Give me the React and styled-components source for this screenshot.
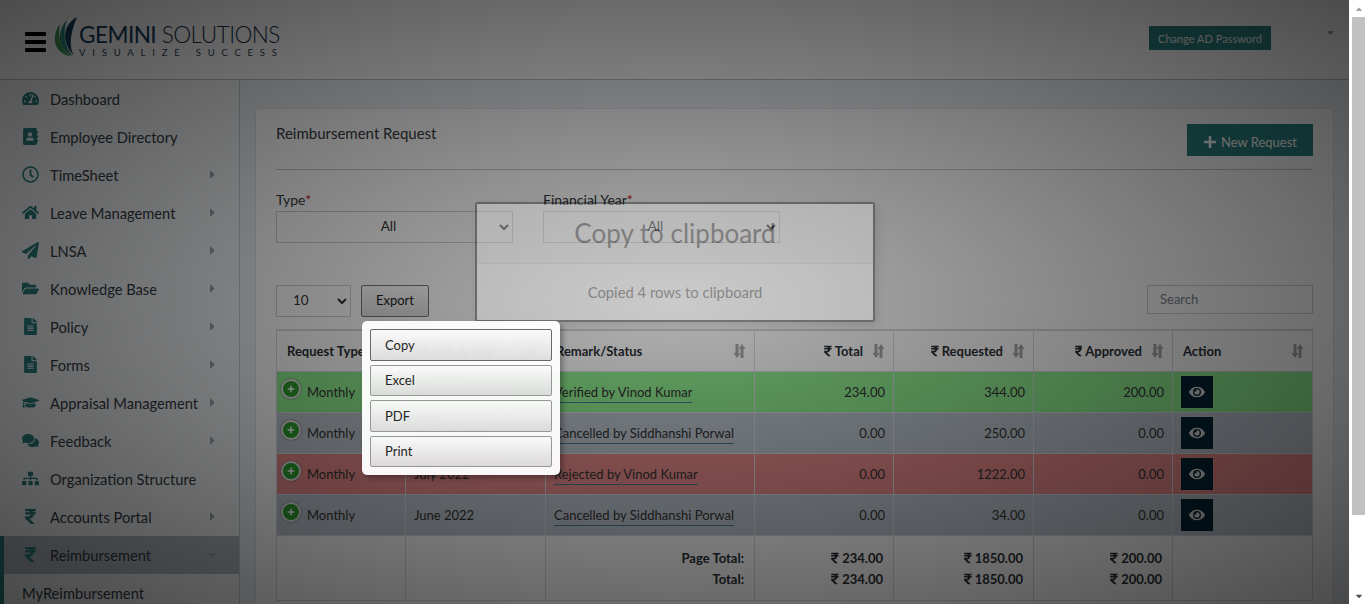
import styled, { createGlobalStyle } from "styled-components";
import {
  FaTachometerAlt,
  FaAddressBook,
  FaRegClock,
  FaHome,
  FaPaperPlane,
  FaFolderOpen,
  FaFileAlt,
  FaGraduationCap,
  FaComments,
  FaSitemap,
  FaRupeeSign,
  FaCaretRight,
  FaCaretDown,
  FaCaretUp,
  FaPlus,
  FaEye,
} from "react-icons/fa";

const menu = [
  { label: "Dashboard", icon: FaTachometerAlt },
  { label: "Employee Directory", icon: FaAddressBook },
  { label: "TimeSheet", icon: FaRegClock, sub: true },
  { label: "Leave Management", icon: FaHome, sub: true },
  { label: "LNSA", icon: FaPaperPlane, sub: true },
  { label: "Knowledge Base", icon: FaFolderOpen, sub: true },
  { label: "Policy", icon: FaFileAlt, sub: true },
  { label: "Forms", icon: FaFileAlt, sub: true },
  { label: "Appraisal Management", icon: FaGraduationCap, sub: true },
  { label: "Feedback", icon: FaComments, sub: true },
  { label: "Organization Structure", icon: FaSitemap },
  { label: "Accounts Portal", icon: FaRupeeSign, sub: true },
];

const rows = [
  { month: "September 2022", remark: "Verified by Vinod Kumar", total: "234.00", requested: "344.00", approved: "200.00", tone: "#90ee90" },
  { month: "August 2022", remark: "Cancelled by Siddhanshi Porwal", total: "0.00", requested: "250.00", approved: "0.00", tone: "#bdc6cf" },
  { month: "July 2022", remark: "Rejected by Vinod Kumar", total: "0.00", requested: "1222.00", approved: "0.00", tone: "#e88a8a" },
  { month: "June 2022", remark: "Cancelled by Siddhanshi Porwal", total: "0.00", requested: "34.00", approved: "0.00", tone: "#bdc6cf" },
];

const Leaf = () => (
  <LogoMark viewBox="0 0 26 42">
    <path d="M24 0C15 5 10 14 13 25c1 5 4 10 8 13C15 30 18 14 24 0z" fill="#15405f" />
    <path d="M14 3C7 10 5 20 9 29c2 4 6 8 11 10C12 32 9 16 14 3z" fill="#2a8a7e" />
    <path d="M7 7C1 15 0 25 5 32c3 4 8 7 13 7C9 34 4 20 7 7z" fill="#3f9a55" />
  </LogoMark>
);

const SortIcon = ({ right }) => (
  <SortArrows $right={right} viewBox="0 0 13 14">
    <path d="M2.5 0h3v9h2L4 14 .5 9h2z" />
    <path d="M7.5 14h3V5h2L9 0 5.500 5h2z" />
  </SortArrows>
);

const Rupee = () => <RupeeGlyph><FaRupeeSign /></RupeeGlyph>;

const App = () => {
  return (
    <>
      <GlobalStyle />
      <Shell>
        <Page>
          <Header>
            <Burger>
              <span />
              <span />
              <span />
            </Burger>
            <Logo>
              <Leaf />
              <LogoText>
                <LogoName>
                  <b>GEMINI</b> SOLUTIONS
                </LogoName>
                <LogoTag>VISUALIZE SUCCESS</LogoTag>
              </LogoText>
            </Logo>
            <HeaderRight>
              <PasswordButton>Change AD Password</PasswordButton>
              <UserCaret>
                <FaCaretDown />
              </UserCaret>
            </HeaderRight>
          </Header>
          <Body>
            <Sidebar>
              {menu.map((item) => (
                <NavItem key={item.label}>
                  <NavIcon>
                    <item.icon />
                  </NavIcon>
                  <NavLabel>{item.label}</NavLabel>
                  {item.sub && (
                    <NavCaret>
                      <FaCaretRight />
                    </NavCaret>
                  )}
                </NavItem>
              ))}
              <NavItem $active>
                <NavIcon>
                  <FaRupeeSign />
                </NavIcon>
                <NavLabel>Reimbursement</NavLabel>
                <NavCaret>
                  <FaCaretDown />
                </NavCaret>
              </NavItem>
              <SubItem>MyReimbursement</SubItem>
            </Sidebar>
            <Main>
              <Card>
                <CardHead>
                  <CardTitle>Reimbursement Request</CardTitle>
                  <NewButton>
                    <FaPlus />
                    New Request
                  </NewButton>
                </CardHead>
                <Filters>
                  <Field>
                    <FieldLabel>
                      Type<Star>*</Star>
                    </FieldLabel>
                    <FieldSelect defaultValue="All">
                      <option>All</option>
                    </FieldSelect>
                  </Field>
                  <Field>
                    <FieldLabel>
                      Financial Year<Star>*</Star>
                    </FieldLabel>
                    <FieldSelect defaultValue="All">
                      <option>All</option>
                    </FieldSelect>
                  </Field>
                </Filters>
                <Controls>
                  <LengthSelect defaultValue="10">
                    <option>10</option>
                  </LengthSelect>
                  <ExportButton>Export</ExportButton>
                  <SearchInput placeholder="Search" />
                </Controls>
                <Table>
                  <colgroup>
                    <col width="129" />
                    <col width="140" />
                    <col width="209" />
                    <col width="139" />
                    <col width="140" />
                    <col width="139" />
                    <col width="140" />
                  </colgroup>
                  <thead>
                    <tr>
                      <Th><ThInner>Request Type<SortIcon /></ThInner></Th>
                      <Th><ThInner>Month &amp; Year<SortIcon /></ThInner></Th>
                      <Th><ThInner>Remark/Status<SortIcon /></ThInner></Th>
                      <Th><ThInner $right><Rupee />Total<SortIcon right /></ThInner></Th>
                      <Th><ThInner $right><Rupee />Requested<SortIcon right /></ThInner></Th>
                      <Th><ThInner $right><Rupee />Approved<SortIcon right /></ThInner></Th>
                      <Th><ThInner>Action<SortIcon /></ThInner></Th>
                    </tr>
                  </thead>
                  <tbody>
                    {rows.map((row) => (
                      <Row key={row.month} $tone={row.tone}>
                        <Td>
                          <TypeCell>
                            <PlusBadge><FaPlus /></PlusBadge>
                            <span>Monthly</span>
                          </TypeCell>
                        </Td>
                        <Td>{row.month}</Td>
                        <Td><RemarkLink>{row.remark}</RemarkLink></Td>
                        <Td $right>{row.total}</Td>
                        <Td $right>{row.requested}</Td>
                        <Td $right>{row.approved}</Td>
                        <Td><ViewButton><FaEye /></ViewButton></Td>
                      </Row>
                    ))}
                  </tbody>
                  <tfoot>
                    <tr>
                      <FootCell />
                      <FootCell />
                      <FootCell>Page Total:<br />Total:</FootCell>
                      <FootCell><Rupee />234.00<br /><Rupee />234.00</FootCell>
                      <FootCell><Rupee />1850.00<br /><Rupee />1850.00</FootCell>
                      <FootCell><Rupee />200.00<br /><Rupee />200.00</FootCell>
                      <FootCell />
                    </tr>
                  </tfoot>
                </Table>
              </Card>
            </Main>
          </Body>
          <Backdrop />
          <InfoBox>
            <InfoTitle>Copy to clipboard</InfoTitle>
            <InfoText>Copied 4 rows to clipboard</InfoText>
          </InfoBox>
          <Collection>
            <CollectionButton $focus>Copy</CollectionButton>
            <CollectionButton>Excel</CollectionButton>
            <CollectionButton>PDF</CollectionButton>
            <CollectionButton>Print</CollectionButton>
          </Collection>
        </Page>
        <Scrollbar>
          <ScrollArrow><FaCaretUp /></ScrollArrow>
          <ScrollThumb />
          <ScrollArrow $bottom><FaCaretDown /></ScrollArrow>
        </Scrollbar>
      </Shell>
    </>
  );
};

export default App;

const GlobalStyle = createGlobalStyle`
  html, body {
    margin: 0;
    padding: 0;
    height: 604px;
    overflow: hidden;
  }
  body {
    font-family: "Lato", "Open Sans", sans-serif;
    font-size: 14px;
    color: #333;
  }
  * {
    box-sizing: border-box;
  }
`;

const Shell = styled.div`
  display: flex;
  width: 1366px;
  height: 604px;
  overflow: hidden;
`;

const Page = styled.div`
  position: relative;
  flex: 0 0 1349px;
  height: 604px;
  overflow: hidden;
  background: #eef1f6;
`;

const Header = styled.header`
  display: flex;
  align-items: center;
  height: 80px;
  padding-left: 25px;
  background: #fff;
  border-bottom: 1px solid #b9c2c9;
`;

const Burger = styled.div`
  display: flex;
  flex-direction: column;
  gap: 4px;
  width: 21px;
  margin-top: 4px;

  span {
    height: 4px;
    border-radius: 1px;
    background: #000;
  }
`;

const Logo = styled.div`
  display: flex;
  align-items: flex-end;
  margin-left: 7px;
  margin-top: -4px;
`;

const LogoMark = styled.svg`
  width: 26px;
  height: 42px;
  flex: none;
`;

const LogoText = styled.div`
  display: flex;
  flex-direction: column;
`;

const LogoName = styled.div`
  font-family: "Lato", sans-serif;
  font-size: 22.6px;
  font-weight: 300;
  line-height: 24px;
  letter-spacing: -0.55px;
  color: #16324a;

  b {
    font-weight: 400;
    color: #123a5c;
  }
`;

const LogoTag = styled.div`
  font-family: "Lato", sans-serif;
  font-size: 9.5px;
  line-height: 12px;
  letter-spacing: 6.8px;
  color: #2d4152;
  white-space: nowrap;
`;

const HeaderRight = styled.div`
  display: flex;
  align-items: center;
  margin-left: auto;
  margin-top: -3px;
`;

const PasswordButton = styled.button`
  width: 122px;
  height: 24px;
  padding: 0;
  border: none;
  background: #2a8080;
  color: #f2f2f2;
  font: 11px "Lato", sans-serif;
`;

const UserCaret = styled.span`
  display: flex;
  margin-left: 54px;
  margin-right: 13px;
  margin-top: -12px;
  font-size: 11px;
  color: #9a9a9a;
`;

const Body = styled.div`
  display: flex;
  height: 524px;
`;

const Sidebar = styled.nav`
  flex: 0 0 240px;
  background: #f4f6f8;
  border-right: 1px solid #c4ccd3;
`;

const NavItem = styled.div`
  display: flex;
  align-items: center;
  height: 38px;
  padding: 0 20px 1px 22px;
  background: ${(props) => (props.$active ? "#b4bcc2" : "transparent")};
  border-left: ${(props) => (props.$active ? "4px solid #2a8080" : "none")};
  ${(props) => props.$active && "padding-left: 18px;"}
  color: #333b44;
  font-size: 14.7px;
`;

const NavIcon = styled.span`
  display: flex;
  justify-content: flex-start;
  flex: 0 0 28px;
  font-size: 17px;
  color: #2a8080;
`;

const NavLabel = styled.span`
  flex: 1;
  white-space: nowrap;
`;

const NavCaret = styled.span`
  display: flex;
  font-size: 13px;
  color: #9aa0a5;
`;

const SubItem = styled.div`
  display: flex;
  align-items: center;
  height: 38px;
  padding: 0 0 1px 18px;
  border-left: 4px solid #2a8080;
  background: #f4f6f8;
  color: #333b44;
  font-size: 14.7px;
`;

const Main = styled.main`
  flex: 1;
  padding: 28px 15px 0;
`;

const Card = styled.section`
  height: 600px;
  padding: 15px 20px;
  background: #fff;
  border: 1px solid #dfe4e8;
  border-radius: 4px;
`;

const CardHead = styled.div`
  display: flex;
  justify-content: space-between;
  align-items: flex-start;
  height: 46px;
  border-bottom: 1px solid #c9c9c9;
`;

const CardTitle = styled.h2`
  margin: 0;
  font-size: 15px;
  font-weight: 400;
  line-height: 18px;
  color: #333b44;
`;

const NewButton = styled.button`
  display: flex;
  align-items: center;
  justify-content: center;
  gap: 4px;
  width: 126px;
  height: 32px;
  padding: 3px 0 0;
  border: none;
  background: #2a8080;
  color: #fff;
  font: 13px "Lato", sans-serif;

  svg {
    font-size: 14px;
  }
`;

const Filters = styled.div`
  display: flex;
  gap: 30px;
  height: 115px;
  padding-top: 21px;
`;

const Field = styled.div`
  display: flex;
  flex-direction: column;
  width: 237px;
`;

const FieldLabel = styled.label`
  height: 20px;
  font-size: 14px;
  line-height: 18px;
  color: #333b44;
`;

const Star = styled.span`
  color: #c9141e;
`;

const FieldSelect = styled.select`
  height: 32px;
  padding: 0 8px 2px;
  border: 1px solid #c9d1d8;
  background: #fff;
  color: #333;
  text-align: center;
  text-align-last: center;
  font: 13.5px "Lato", sans-serif;
`;

const Controls = styled.div`
  display: flex;
  align-items: flex-start;
  height: 44px;
`;

const LengthSelect = styled.select`
  width: 75px;
  height: 32px;
  padding: 0 0 2px 12px;
  border: 1px solid #c9d1d8;
  background: #fff;
  color: #333;
  font: 13.5px "Lato", sans-serif;
`;

const ExportButton = styled.button`
  width: 68px;
  height: 32px;
  margin-left: 10px;
  padding: 0 0 2px;
  border: 1px solid #777;
  border-radius: 2px;
  background: linear-gradient(to bottom, #fff 0%, #e0e0e0 100%);
  color: #222;
  font: 13px "Lato", sans-serif;
`;

const SearchInput = styled.input`
  width: 166px;
  height: 29px;
  margin-left: auto;
  padding: 0 12px 2px;
  border: 1px solid #c9d1d8;
  background: #fff;
  font: 13px "Lato", sans-serif;

  &::placeholder {
    color: #7d8790;
  }
`;

const Table = styled.table`
  width: 1036px;
  table-layout: fixed;
  border-collapse: collapse;
  border: 1px solid #d6dce1;
  border-top-width: 2px;
`;

const Th = styled.th`
  height: 41px;
  padding: 0 8px 0 10px;
  border: 1px solid #d6dce1;
  background: #fff;
  color: #2a2f35;
  font-size: 13px;
  font-weight: 700;
  white-space: nowrap;
`;

const ThInner = styled.div`
  display: flex;
  align-items: center;
  justify-content: ${(props) => (props.$right ? "flex-end" : "flex-start")};
  text-align: left;
`;

const SortArrows = styled.svg`
  flex: none;
  width: 13px;
  height: 14px;
  margin-left: ${(props) => (props.$right ? "9px" : "auto")};
  fill: #a8a8a8;
`;

const RupeeGlyph = styled.span`
  display: inline-flex;
  margin-right: 3px;
  font-size: 12px;
  vertical-align: -1px;

  svg {
    width: 0.65em;
  }
`;

const Row = styled.tr`
  height: 41px;
  background: ${(props) => props.$tone};
`;

const Td = styled.td`
  padding: 0 8px;
  border: 1px solid #d6dce1;
  text-align: ${(props) => (props.$right ? "right" : "left")};
  color: #333;
  font-size: 13px;
  white-space: nowrap;
`;

const TypeCell = styled.div`
  display: flex;
  align-items: flex-start;
  margin-left: -4px;
  margin-top: -4px;

  span:last-child {
    margin-left: 6px;
    margin-top: 5px;
  }
`;

const PlusBadge = styled.span`
  display: flex;
  align-items: center;
  justify-content: center;
  width: 20px;
  height: 20px;
  border: 2px solid #e8e8e8;
  border-radius: 50%;
  background: #2ca02c;
  color: #fff;
  font-size: 8px;
  box-shadow: 0 0 2px #555;
`;

const RemarkLink = styled.a`
  padding-bottom: 2px;
  border-bottom: 1px solid #4a7a9c;
  color: #333;
`;

const ViewButton = styled.button`
  display: flex;
  align-items: center;
  justify-content: center;
  width: 32px;
  height: 32px;
  padding: 0;
  border: none;
  background: #042434;
  color: #dcdcdc;
  font-size: 16px;
`;

const FootCell = styled.td`
  height: 65px;
  padding: 3px 10px 0;
  border: 1px solid #d6dce1;
  text-align: right;
  color: #2a2f35;
  font-size: 13px;
  font-weight: 700;
  line-height: 21px;
  white-space: nowrap;
`;

const Backdrop = styled.div`
  position: absolute;
  inset: 0;
  background: radial-gradient(ellipse farthest-corner at center, rgba(0, 0, 0, 0.3) 0%, rgba(0, 0, 0, 0.7) 100%);
`;

const InfoBox = styled.div`
  position: absolute;
  top: 202px;
  left: 475px;
  width: 400px;
  height: 120px;
  border: 2px solid #000;
  border-radius: 3px;
  background: #fff;
  box-shadow: 3px 3px 8px rgba(0, 0, 0, 0.3);
  text-align: center;
  opacity: 0.32;
`;

const InfoTitle = styled.h2`
  height: 60px;
  margin: 0;
  border-bottom: 1px solid #ddd;
  background: #f3f3f3;
  color: #333;
  font-size: 26px;
  font-weight: 400;
  line-height: 58px;
`;

const InfoText = styled.div`
  padding-top: 19px;
  color: #333;
  font-size: 14.8px;
`;

const Collection = styled.div`
  position: absolute;
  top: 321px;
  left: 362px;
  display: flex;
  flex-direction: column;
  gap: 4px;
  width: 198px;
  height: 154px;
  padding: 8px;
  border-radius: 5px;
  background: #fff;
  box-shadow: 3px 3px 5px rgba(0, 0, 0, 0.3);
  opacity: 0.96;
`;

const CollectionButton = styled.button`
  height: 32px;
  padding: 0 0 0 14px;
  border: 1px solid ${(props) => (props.$focus ? "#666" : "#999")};
  border-radius: 2px;
  background: linear-gradient(to bottom, #fff 0%, #e0e0e0 100%);
  color: #222;
  font: 13px "Lato", sans-serif;
  text-align: left;
`;

const Scrollbar = styled.div`
  display: flex;
  flex-direction: column;
  align-items: center;
  flex: 0 0 17px;
  height: 604px;
  padding-left: 2px;
  background: #fff;
`;

const ScrollArrow = styled.div`
  display: flex;
  justify-content: center;
  align-items: center;
  height: 17px;
  margin-top: ${(props) => (props.$bottom ? "auto" : "0")};
  font-size: 10px;
  color: ${(props) => (props.$bottom ? "#505050" : "#a3a3a3")};
`;

const ScrollThumb = styled.div`
  width: 13px;
  height: 498px;
  background: #c1c1c1;
`;
